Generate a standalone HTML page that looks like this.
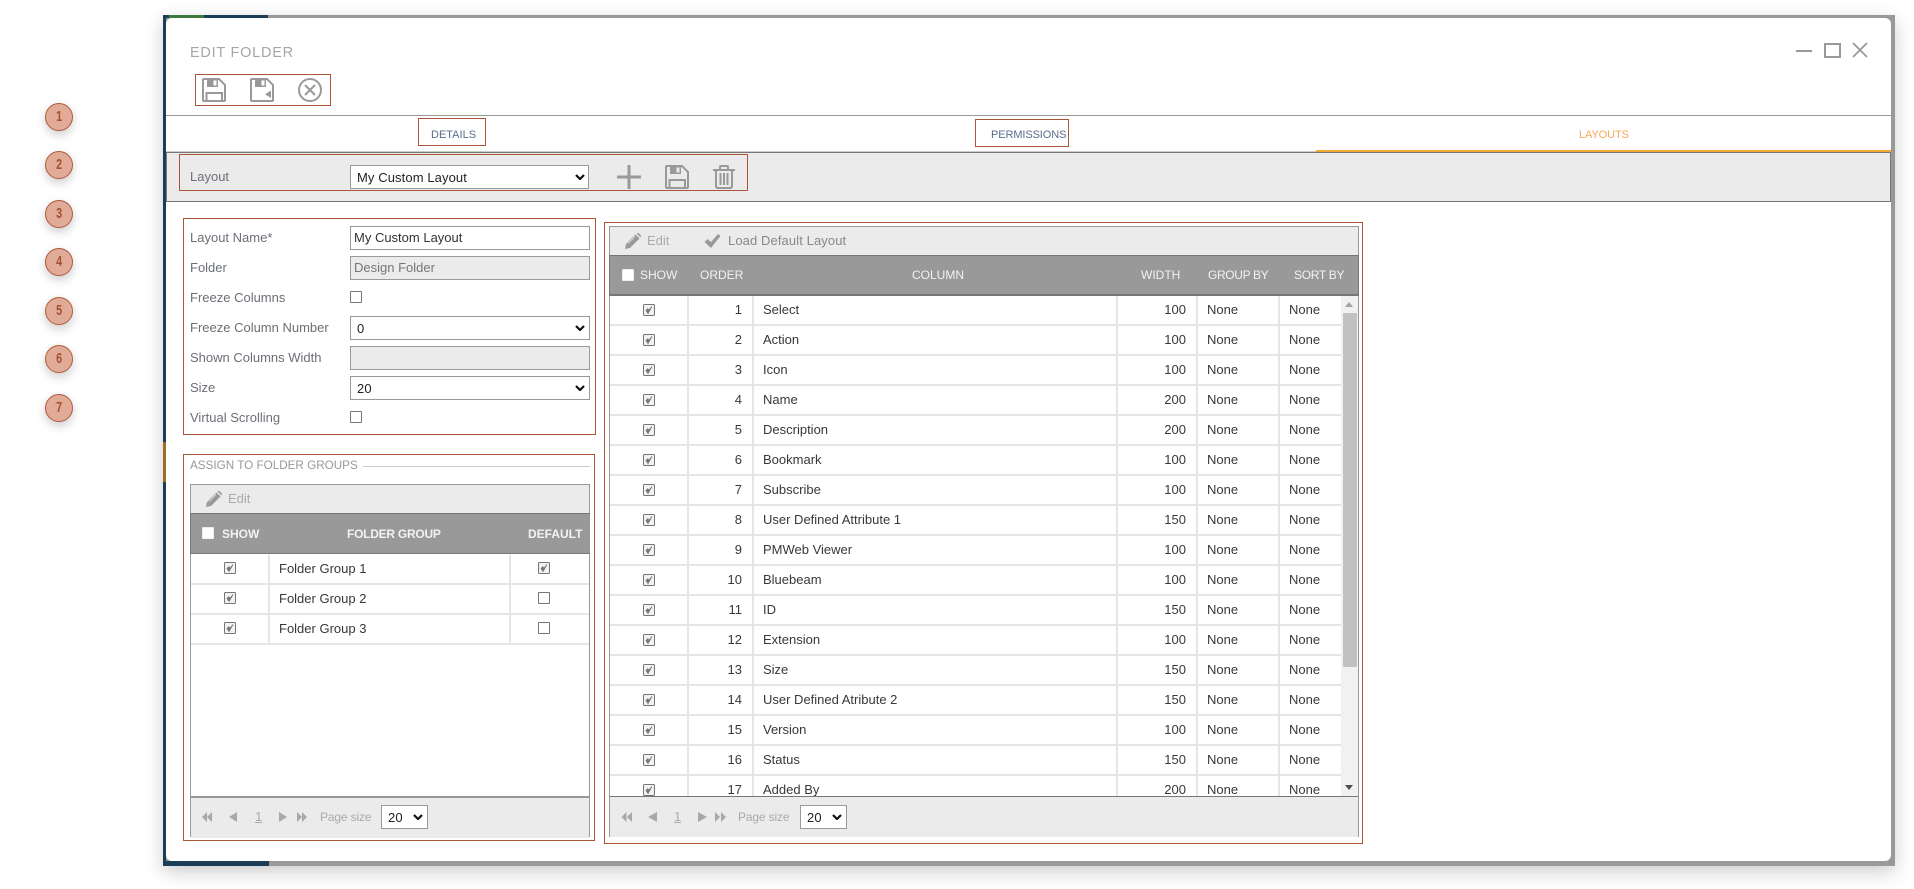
<!DOCTYPE html>
<html><head><meta charset="utf-8"><title>Edit Folder</title>
<style>
html,body{margin:0;padding:0;background:#fff;width:1914px;height:889px;overflow:hidden}
body{font-family:"Liberation Sans",sans-serif;font-size:13px;color:#333;position:relative}
.a,.a *{box-sizing:border-box}
.a{position:absolute}
.t{position:absolute;white-space:nowrap;line-height:16px;height:16px}
.lb{left:190px;color:#6b6f76}
.rb{position:absolute;border:1px solid #ad5536;box-sizing:border-box}
.n{position:absolute;left:45px;width:28px;height:28px;border-radius:50%;background:#e1ab98;border:1px solid #b05a3c;color:#a5502f;font-size:15px;font-weight:700;line-height:26px;text-align:center;box-shadow:0 4px 10px rgba(0,0,0,.2);box-sizing:border-box}
.n span{display:inline-block;transform:scale(.72,1)}
.inp{position:absolute;left:350px;width:240px;height:24px;border:1px solid #999;background:#fff;padding-left:3px;line-height:22px;box-sizing:border-box;color:#333;white-space:nowrap}
.dis{background:#ebebeb;color:#777}
select{position:absolute;box-sizing:border-box;height:24px;border:1px solid #999;border-radius:0;background:#fff;font:13px "Liberation Sans",sans-serif;letter-spacing:.1px;color:#222;margin:0;padding:0 0 0 6px;-webkit-appearance:none;appearance:none}
.cb{position:absolute;width:12px;height:12px;border:1px solid #767676;background:#fff;border-radius:1px;box-sizing:border-box}
.ck{position:absolute;width:12px;height:12px}
.hd{color:#f2f2f2;font-size:12px}
.tb{background:#ebebeb;position:absolute}
.sep{position:absolute;background:#e5e5e5}
.pg{position:absolute;background:#ebebeb}
.c{color:#383838}
.ps{color:#aaa;font-size:12px;letter-spacing:-.15px}
svg{position:absolute;overflow:visible}
</style></head><body>
<svg width="0" height="0" style="position:absolute"><defs>
<symbol id="ck" viewBox="0 0 12 12"><rect x=".5" y=".5" width="11" height="11" rx="1" fill="#f2f2f2" stroke="#767676"/><path d="M3 6.500L5 9.500L9 2.500L6.200 6L4.600 4.800Z" fill="#777" stroke="#777" stroke-width=".8"/></symbol>
<symbol id="pen" viewBox="0 0 16 16"><path d="M0 16L1 11L10.500 1.500L14.500 5.500L5 15Z M11.500 .5Q13 -.5 14 .5L15.500 2Q16.500 3 15.500 4.500Z" fill="currentColor"/><path d="M3 10.500L10 3.500" stroke="#ebebeb" stroke-width=".8"/></symbol>
<symbol id="tick" viewBox="0 0 16 16"><path d="M0 9L3 6L6.500 9L13.500 1L16 3L6.500 15Z" fill="currentColor"/></symbol>
<symbol id="fl" viewBox="0 0 24 24"><path d="M2 1H17L23 7V22Q23 23 22 23H2Q1 23 1 22V2Q1 1 2 1Z" fill="none" stroke="#999" stroke-width="2"/><path d="M5 1H16V9H5Z" fill="#999"/><path d="M11.500 2.500H14.500V7.500H11.500Z" fill="currentColor"/><path d="M4.500 23V15H20V23" fill="none" stroke="#999" stroke-width="2"/></symbol>
<symbol id="chev" viewBox="0 0 10 6"><path d="M1 1L5 5L9 1" fill="none" stroke="#111" stroke-width="2.200"/></symbol>
</defs></svg>

<!-- numbered callouts -->
<div class="n" style="top:103px"><span>1</span></div>
<div class="n" style="top:151px"><span>2</span></div>
<div class="n" style="top:200px"><span>3</span></div>
<div class="n" style="top:248px"><span>4</span></div>
<div class="n" style="top:297px"><span>5</span></div>
<div class="n" style="top:345px"><span>6</span></div>
<div class="n" style="top:394px"><span>7</span></div>

<!-- backdrop frame -->
<div class="a" style="left:163px;top:15px;width:1732px;height:851px;background:#999;box-shadow:0 6px 18px rgba(0,0,0,.2)"></div>
<div class="a" style="left:163px;top:15px;width:105px;height:3px;background:#1c3d56"></div>
<div class="a" style="left:169px;top:15px;width:35px;height:3px;background:#3d7a3d"></div>
<div class="a" style="left:163px;top:15px;width:3px;height:851px;background:#1c3d56"></div>
<div class="a" style="left:163px;top:442px;width:3px;height:40px;background:#a06a28"></div>
<div class="a" style="left:163px;top:861px;width:106px;height:5px;background:#1c3d56"></div>

<!-- modal -->
<div class="a" style="left:166px;top:18px;width:1725px;height:843px;background:#fff;border-radius:6px"></div>

<div class="t" style="left:190px;top:45px;font-size:14.500px;color:#a6a6a6;letter-spacing:.75px">EDIT FOLDER</div>

<!-- window controls -->
<svg style="left:1795px;top:39px" width="74" height="24" viewBox="0 0 74 24" fill="none" stroke="#999" stroke-width="2"><path d="M1 12H17"/><rect x="30" y="5" width="15" height="13"/><path d="M58 4L72 18M72 4L58 18" stroke-width="1.800"/></svg>

<!-- top toolbar -->
<div class="rb" style="left:195px;top:74px;width:136px;height:32px"></div>
<svg style="left:202px;top:78px;color:#fff" width="24" height="24"><use href="#fl"/></svg>
<svg style="left:250px;top:78px" width="24" height="24" viewBox="0 0 24 24"><path d="M2 1H17L23 7V22Q23 23 22 23H2Q1 23 1 22V2Q1 1 2 1Z" fill="none" stroke="#999" stroke-width="2"/><path d="M5 1H16V9H5Z" fill="#999"/><path d="M11.500 2.500H14.500V7.500H11.500Z" fill="#fff"/><path d="M21 12.500V20L15 16.200Z" fill="#999"/></svg>
<svg style="left:298px;top:78px" width="24" height="24" viewBox="0 0 24 24" fill="none" stroke="#999" stroke-width="2"><circle cx="12" cy="12" r="11"/><path d="M7 7L17 17M17 7L7 17"/></svg>

<!-- tabs -->
<div class="a" style="left:166px;top:115px;width:1725px;height:1px;background:#999"></div>
<div class="rb" style="left:418px;top:118px;width:68px;height:28px"></div>
<div class="t" style="left:431px;top:127px;font-size:11px;color:#5a6d8c">DETAILS</div>
<div class="rb" style="left:975px;top:119px;width:94px;height:28px"></div>
<div class="t" style="left:991px;top:127px;font-size:11px;color:#5a6d8c;letter-spacing:-.1px">PERMISSIONS</div>
<div class="t" style="left:1579px;top:127px;font-size:11px;color:#f8a858;letter-spacing:-.1px">LAYOUTS</div>
<div class="a" style="left:166px;top:151px;width:1150px;height:1px;background:#ccc"></div>
<div class="a" style="left:1316px;top:150px;width:575px;height:2px;background:#f5a733"></div>

<!-- layout bar -->
<div class="a" style="left:166px;top:152px;width:1725px;height:50px;background:#ebebeb;border:1px solid #777"></div>
<div class="rb" style="left:179px;top:154px;width:569px;height:37px"></div>
<div class="t lb" style="top:169px">Layout</div>
<select style="left:350px;top:165px;width:239px"><option>My Custom Layout</option></select>
<svg style="left:575px;top:174px" width="10" height="6"><use href="#chev"/></svg>
<svg style="left:617px;top:165px" width="24" height="24" fill="#999"><rect x="0" y="10.500" width="24" height="3"/><rect x="10.500" y="0" width="3" height="24"/></svg>
<svg style="left:665px;top:165px;color:#ebebeb" width="24" height="24"><use href="#fl"/></svg>
<svg style="left:713px;top:165px" width="22" height="24" viewBox="0 0 22 24" fill="none" stroke="#999" stroke-width="2"><path d="M0 5H22M7 5V2Q7 1 8 1H14Q15 1 15 2V5M3 5V21Q3 23 5 23H17Q19 23 19 21V5M7.500 8V20M11 8V20M14.500 8V20"/></svg>

<!-- form -->
<div class="rb" style="left:183px;top:218px;width:413px;height:217px"></div>
<div class="t lb" style="top:230px">Layout Name*</div>
<div class="inp" style="top:226px">My Custom Layout</div>
<div class="t lb" style="top:260px">Folder</div>
<div class="inp dis" style="top:256px">Design Folder</div>
<div class="t lb" style="top:290px">Freeze Columns</div>
<div class="cb" style="left:350px;top:291px"></div>
<div class="t lb" style="top:320px">Freeze Column Number</div>
<select style="left:350px;top:316px;width:240px"><option>0</option></select>
<svg style="left:575px;top:325px" width="10" height="6"><use href="#chev"/></svg>
<div class="t lb" style="top:350px">Shown Columns Width</div>
<div class="inp dis" style="top:346px"></div>
<div class="t lb" style="top:380px">Size</div>
<select style="left:350px;top:376px;width:240px"><option>20</option></select>
<svg style="left:575px;top:385px" width="10" height="6"><use href="#chev"/></svg>
<div class="t lb" style="top:410px">Virtual Scrolling</div>
<div class="cb" style="left:350px;top:411px"></div>

<!-- assign groups -->
<div class="rb" style="left:183px;top:454px;width:412px;height:387px"></div>
<div class="t" style="left:190px;top:458px;font-size:11.700px;color:#999">ASSIGN TO FOLDER GROUPS</div>
<div class="a" style="left:363px;top:466px;width:227px;height:1px;background:#ccc"></div>

<div class="a" style="left:190px;top:484px;width:400px;height:353px;border:1px solid #999;background:#fff"></div>
<div class="tb" style="left:191px;top:485px;width:398px;height:28px"></div>
<svg style="left:206px;top:491px;color:#999" width="16" height="16"><use href="#pen"/></svg>
<div class="t" style="left:228px;top:491px;color:#aaa">Edit</div>
<div class="a" style="left:190px;top:513px;width:400px;height:41px;background:#999;border-top:1px solid #777;border-bottom:1px solid #777;border-left:1px solid #777"></div>
<div class="cb" style="left:202px;top:527px;border-color:#eee"></div>
<div class="t hd" style="left:222px;top:526px;font-weight:700">SHOW</div>
<div class="t hd" style="left:347px;top:526px;font-weight:700;letter-spacing:-.25px">FOLDER GROUP</div>
<div class="t hd" style="left:528px;top:526px;font-weight:700">DEFAULT</div>
<div class="sep" style="left:191px;top:583px;width:398px;height:2px"></div>
<div class="sep" style="left:191px;top:613px;width:398px;height:2px"></div>
<div class="sep" style="left:191px;top:643px;width:398px;height:2px"></div>
<div class="sep" style="left:268px;top:555px;width:2px;height:88px"></div>
<div class="sep" style="left:509px;top:555px;width:2px;height:88px"></div>
<svg class="ck" style="left:224px;top:562px"><use href="#ck"/></svg>
<svg class="ck" style="left:224px;top:592px"><use href="#ck"/></svg>
<svg class="ck" style="left:224px;top:622px"><use href="#ck"/></svg>
<svg class="ck" style="left:538px;top:562px"><use href="#ck"/></svg>
<div class="cb" style="left:538px;top:592px"></div>
<div class="cb" style="left:538px;top:622px"></div>
<div class="t c" style="left:279px;top:561px">Folder Group 1</div>
<div class="t c" style="left:279px;top:591px">Folder Group 2</div>
<div class="t c" style="left:279px;top:621px">Folder Group 3</div>
<div class="pg" style="left:191px;top:796px;width:398px;height:40px;border-top:2px solid #999"></div>
<svg style="left:202px;top:812px" width="110" height="10" viewBox="0 0 110 10" fill="#a8a8a8"><path d="M5 0V10L0 5ZM10 0V10L5 5ZM35 0V10L27 5ZM77 0V10L85 5ZM95 0V10L100 5ZM100 0V10L105 5Z"/></svg>
<div class="t" style="left:255px;top:809px;color:#aaa;text-decoration:underline">1</div>
<div class="t ps" style="left:320px;top:809px">Page size</div>
<select style="left:381px;top:805px;width:47px"><option>20</option></select>
<svg style="left:413px;top:814px" width="10" height="6"><use href="#chev"/></svg>

<!-- columns grid -->
<div class="rb" style="left:604px;top:222px;width:759px;height:622px"></div>
<div class="a" style="left:609px;top:226px;width:750px;height:611px;border:1px solid #999;background:#fff"></div>
<div class="tb" style="left:610px;top:227px;width:748px;height:28px"></div>
<svg style="left:625px;top:233px;color:#999" width="16" height="16"><use href="#pen"/></svg>
<div class="t" style="left:647px;top:233px;color:#aaa">Edit</div>
<svg style="left:704px;top:233px;color:#999" width="17" height="16"><use href="#tick"/></svg>
<div class="t" style="left:728px;top:233px;color:#888;letter-spacing:.1px">Load Default Layout</div>
<div class="a" style="left:609px;top:255px;width:750px;height:41px;background:#999;border:1px solid #777;border-width:1px 1px 2px 1px"></div>
<div class="cb" style="left:622px;top:269px;border-color:#eee"></div>
<div class="t hd" style="left:640px;top:267px">SHOW</div>
<div class="t hd" style="left:700px;top:267px">ORDER</div>
<div class="t hd" style="left:912px;top:267px">COLUMN</div>
<div class="t hd" style="left:1141px;top:267px">WIDTH</div>
<div class="t hd" style="left:1208px;top:267px;letter-spacing:-.35px">GROUP BY</div>
<div class="t hd" style="left:1294px;top:267px;letter-spacing:-.3px">SORT BY</div>

<div class="a" style="left:610px;top:296px;width:748px;height:500px;overflow:hidden">
<div class="sep" style="left:77px;top:0;width:2px;height:500px"></div>
<div class="sep" style="left:142px;top:0;width:2px;height:500px"></div>
<div class="sep" style="left:506px;top:0;width:2px;height:500px"></div>
<div class="sep" style="left:586px;top:0;width:2px;height:500px"></div>
<div class="sep" style="left:668px;top:0;width:2px;height:500px"></div>
<div class="sep" style="left:0;top:28px;width:731px;height:2px"></div>
<div class="sep" style="left:0;top:58px;width:731px;height:2px"></div>
<div class="sep" style="left:0;top:88px;width:731px;height:2px"></div>
<div class="sep" style="left:0;top:118px;width:731px;height:2px"></div>
<div class="sep" style="left:0;top:148px;width:731px;height:2px"></div>
<div class="sep" style="left:0;top:178px;width:731px;height:2px"></div>
<div class="sep" style="left:0;top:208px;width:731px;height:2px"></div>
<div class="sep" style="left:0;top:238px;width:731px;height:2px"></div>
<div class="sep" style="left:0;top:268px;width:731px;height:2px"></div>
<div class="sep" style="left:0;top:298px;width:731px;height:2px"></div>
<div class="sep" style="left:0;top:328px;width:731px;height:2px"></div>
<div class="sep" style="left:0;top:358px;width:731px;height:2px"></div>
<div class="sep" style="left:0;top:388px;width:731px;height:2px"></div>
<div class="sep" style="left:0;top:418px;width:731px;height:2px"></div>
<div class="sep" style="left:0;top:448px;width:731px;height:2px"></div>
<div class="sep" style="left:0;top:478px;width:731px;height:2px"></div>

<svg class="ck" style="left:33px;top:8px"><use href="#ck"/></svg><div class="t c" style="right:616px;top:6px">1</div><div class="t c" style="left:153px;top:6px">Select</div><div class="t c" style="right:172px;top:6px">100</div><div class="t c" style="left:597px;top:6px">None</div><div class="t c" style="left:679px;top:6px">None</div>
<svg class="ck" style="left:33px;top:38px"><use href="#ck"/></svg><div class="t c" style="right:616px;top:36px">2</div><div class="t c" style="left:153px;top:36px">Action</div><div class="t c" style="right:172px;top:36px">100</div><div class="t c" style="left:597px;top:36px">None</div><div class="t c" style="left:679px;top:36px">None</div>
<svg class="ck" style="left:33px;top:68px"><use href="#ck"/></svg><div class="t c" style="right:616px;top:66px">3</div><div class="t c" style="left:153px;top:66px">Icon</div><div class="t c" style="right:172px;top:66px">100</div><div class="t c" style="left:597px;top:66px">None</div><div class="t c" style="left:679px;top:66px">None</div>
<svg class="ck" style="left:33px;top:98px"><use href="#ck"/></svg><div class="t c" style="right:616px;top:96px">4</div><div class="t c" style="left:153px;top:96px">Name</div><div class="t c" style="right:172px;top:96px">200</div><div class="t c" style="left:597px;top:96px">None</div><div class="t c" style="left:679px;top:96px">None</div>
<svg class="ck" style="left:33px;top:128px"><use href="#ck"/></svg><div class="t c" style="right:616px;top:126px">5</div><div class="t c" style="left:153px;top:126px">Description</div><div class="t c" style="right:172px;top:126px">200</div><div class="t c" style="left:597px;top:126px">None</div><div class="t c" style="left:679px;top:126px">None</div>
<svg class="ck" style="left:33px;top:158px"><use href="#ck"/></svg><div class="t c" style="right:616px;top:156px">6</div><div class="t c" style="left:153px;top:156px">Bookmark</div><div class="t c" style="right:172px;top:156px">100</div><div class="t c" style="left:597px;top:156px">None</div><div class="t c" style="left:679px;top:156px">None</div>
<svg class="ck" style="left:33px;top:188px"><use href="#ck"/></svg><div class="t c" style="right:616px;top:186px">7</div><div class="t c" style="left:153px;top:186px">Subscribe</div><div class="t c" style="right:172px;top:186px">100</div><div class="t c" style="left:597px;top:186px">None</div><div class="t c" style="left:679px;top:186px">None</div>
<svg class="ck" style="left:33px;top:218px"><use href="#ck"/></svg><div class="t c" style="right:616px;top:216px">8</div><div class="t c" style="left:153px;top:216px">User Defined Attribute 1</div><div class="t c" style="right:172px;top:216px">150</div><div class="t c" style="left:597px;top:216px">None</div><div class="t c" style="left:679px;top:216px">None</div>
<svg class="ck" style="left:33px;top:248px"><use href="#ck"/></svg><div class="t c" style="right:616px;top:246px">9</div><div class="t c" style="left:153px;top:246px">PMWeb Viewer</div><div class="t c" style="right:172px;top:246px">100</div><div class="t c" style="left:597px;top:246px">None</div><div class="t c" style="left:679px;top:246px">None</div>
<svg class="ck" style="left:33px;top:278px"><use href="#ck"/></svg><div class="t c" style="right:616px;top:276px">10</div><div class="t c" style="left:153px;top:276px">Bluebeam</div><div class="t c" style="right:172px;top:276px">100</div><div class="t c" style="left:597px;top:276px">None</div><div class="t c" style="left:679px;top:276px">None</div>
<svg class="ck" style="left:33px;top:308px"><use href="#ck"/></svg><div class="t c" style="right:616px;top:306px">11</div><div class="t c" style="left:153px;top:306px">ID</div><div class="t c" style="right:172px;top:306px">150</div><div class="t c" style="left:597px;top:306px">None</div><div class="t c" style="left:679px;top:306px">None</div>
<svg class="ck" style="left:33px;top:338px"><use href="#ck"/></svg><div class="t c" style="right:616px;top:336px">12</div><div class="t c" style="left:153px;top:336px">Extension</div><div class="t c" style="right:172px;top:336px">100</div><div class="t c" style="left:597px;top:336px">None</div><div class="t c" style="left:679px;top:336px">None</div>
<svg class="ck" style="left:33px;top:368px"><use href="#ck"/></svg><div class="t c" style="right:616px;top:366px">13</div><div class="t c" style="left:153px;top:366px">Size</div><div class="t c" style="right:172px;top:366px">150</div><div class="t c" style="left:597px;top:366px">None</div><div class="t c" style="left:679px;top:366px">None</div>
<svg class="ck" style="left:33px;top:398px"><use href="#ck"/></svg><div class="t c" style="right:616px;top:396px">14</div><div class="t c" style="left:153px;top:396px">User Defined Atribute 2</div><div class="t c" style="right:172px;top:396px">150</div><div class="t c" style="left:597px;top:396px">None</div><div class="t c" style="left:679px;top:396px">None</div>
<svg class="ck" style="left:33px;top:428px"><use href="#ck"/></svg><div class="t c" style="right:616px;top:426px">15</div><div class="t c" style="left:153px;top:426px">Version</div><div class="t c" style="right:172px;top:426px">100</div><div class="t c" style="left:597px;top:426px">None</div><div class="t c" style="left:679px;top:426px">None</div>
<svg class="ck" style="left:33px;top:458px"><use href="#ck"/></svg><div class="t c" style="right:616px;top:456px">16</div><div class="t c" style="left:153px;top:456px">Status</div><div class="t c" style="right:172px;top:456px">150</div><div class="t c" style="left:597px;top:456px">None</div><div class="t c" style="left:679px;top:456px">None</div>
<svg class="ck" style="left:33px;top:488px"><use href="#ck"/></svg><div class="t c" style="right:616px;top:486px">17</div><div class="t c" style="left:153px;top:486px">Added By</div><div class="t c" style="right:172px;top:486px">200</div><div class="t c" style="left:597px;top:486px">None</div><div class="t c" style="left:679px;top:486px">None</div>

<!-- scrollbar -->
<div class="a" style="left:731px;top:0;width:17px;height:500px;background:#f1f1f1"></div>
<div class="a" style="left:733px;top:17px;width:14px;height:354px;background:#c1c1c1"></div>
<svg style="left:735px;top:6px" width="8" height="5" fill="#a3a3a3"><path d="M4 0L8 5H0Z"/></svg>
<svg style="left:735px;top:489px" width="8" height="5" fill="#505050"><path d="M0 0H8L4 5Z"/></svg>
</div>

<div class="pg" style="left:610px;top:796px;width:748px;height:40px;border-top:1px solid #777"></div>
<svg style="left:621px;top:812px" width="110" height="10" viewBox="0 0 110 10" fill="#a8a8a8"><path d="M5.500 0V10L.5 5ZM11 0V10L6 5ZM36 0V10L27 5ZM77 0V10L86 5ZM94 0V10L99 5ZM100 0V10L105 5Z"/></svg>
<div class="t" style="left:674px;top:809px;color:#aaa;text-decoration:underline">1</div>
<div class="t ps" style="left:738px;top:809px">Page size</div>
<select style="left:800px;top:805px;width:47px"><option>20</option></select>
<svg style="left:832px;top:814px" width="10" height="6"><use href="#chev"/></svg>
</body></html>
